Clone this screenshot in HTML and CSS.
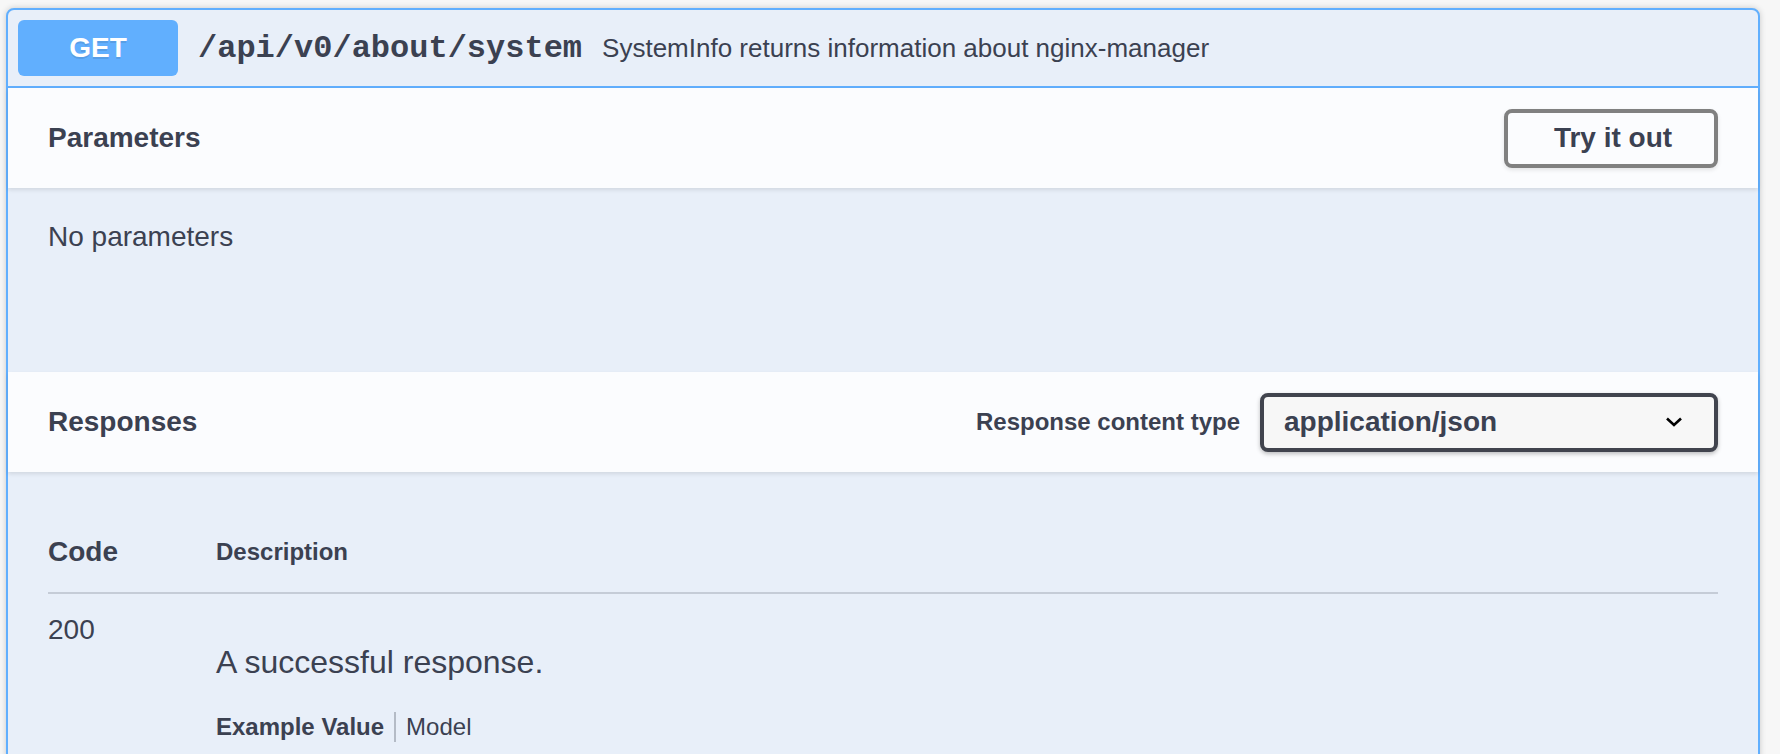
FILE: index.html
```html
<!DOCTYPE html>
<html lang="en">
<head>
<meta charset="utf-8">
<title>Swagger</title>
<link rel="stylesheet" href="styles.css">
</head>
<body>
<div class="opblock">
  <div class="summary">
    <span class="method">GET</span>
    <span class="path">/api/v0/about/system</span>
    <span class="summary-desc">SystemInfo returns information about nginx-manager</span>
  </div>
  <div class="section-header">
    <h4 class="section-title">Parameters</h4>
    <button class="try-out">Try it out</button>
  </div>
  <div class="params-body">
    <p class="no-params">No parameters</p>
  </div>
  <div class="section-header">
    <h4 class="section-title">Responses</h4>
    <div class="media-type">
      <span class="media-label">Response content type</span>
      <div class="select">
        <span>application/json</span>
        <svg class="chev" width="20" height="14" viewBox="0 0 20 14"><path d="M3 3.5 L10 10 L17 3.5" fill="none" stroke="#000" stroke-width="2.6"/></svg>
      </div>
    </div>
  </div>
  <div class="responses-body">
    <div class="thead">
      <div class="col-code th-code">Code</div>
      <div class="col-desc th-desc">Description</div>
    </div>
    <div class="row">
      <div class="col-code status">200</div>
      <div class="col-desc">
        <p class="resp-text">A successful response.</p>
        <div class="tabs">
          <span class="tab active">Example Value</span>
          <span class="tab-sep"></span>
          <span class="tab">Model</span>
        </div>
      </div>
    </div>
  </div>
</div>
</body>
</html>
```
FILE: styles.css
```css
html, body {
  margin: 0;
  height: 100%;
}
body {
  background: #f7f7f7;
  padding: 8px 20px 0 6px;
  font-family: "Liberation Sans", Arial, sans-serif;
  color: #3b4151;
  overflow: hidden;
}
.opblock {
  border: 2px solid #61affe;
  border-radius: 8px;
  background: #e8eff9;
  box-shadow: 0 0 6px rgba(0,0,0,.19);
  min-height: 800px;
}
.summary {
  display: flex;
  align-items: center;
  padding: 10px;
  border-bottom: 2px solid #61affe;
}
.method {
  width: 160px;
  height: 56px;
  display: flex;
  align-items: center;
  justify-content: center;
  background: #61affe;
  color: #fff;
  font-weight: 700;
  font-size: 28px;
  border-radius: 6px;
  text-shadow: 0 2px 0 rgba(0,0,0,.1);
}
.path {
  font-family: "Liberation Mono", "Courier New", monospace;
  font-weight: 700;
  font-size: 32px;
  padding: 0 20px;
  color: #3b4151;
}
.summary-desc {
  font-size: 26px;
  color: #3b4151;
}
.section-header {
  display: flex;
  align-items: center;
  justify-content: space-between;
  min-height: 100px;
  box-sizing: border-box;
  padding: 16px 40px;
  background: rgba(255,255,255,.8);
  box-shadow: 0 2px 4px rgba(0,0,0,.1);
  position: relative;
}
.section-title {
  margin: 0;
  font-size: 28px;
  font-weight: 700;
}
.try-out {
  width: 214px;
  height: 59px;
  font-family: "Liberation Sans", Arial, sans-serif;
  font-size: 28px;
  font-weight: 700;
  color: #3b4151;
  background: transparent;
  border: 4px solid #808080;
  border-radius: 8px;
  box-shadow: 0 2px 4px rgba(0,0,0,.1);
  padding: 0 0 0 4px;
}
.params-body {
  height: 184px;
  box-sizing: border-box;
  padding: 30px 40px;
}
.no-params {
  margin: 0;
  font-size: 28px;
  line-height: 38px;
}
.media-type {
  display: flex;
  align-items: center;
  gap: 20px;
}
.media-label {
  font-size: 24px;
  font-weight: 700;
}
.select {
  width: 458px;
  height: 59px;
  box-sizing: border-box;
  display: flex;
  align-items: center;
  justify-content: space-between;
  padding: 0 30px 0 20px;
  background: #f7f7f7;
  border: 4px solid #41444e;
  border-radius: 8px;
  box-shadow: 0 2px 4px rgba(0,0,0,.25);
  font-size: 28px;
  font-weight: 700;
}
.responses-body {
  padding: 40px;
}
.thead {
  display: flex;
  align-items: center;
  padding: 24px 0;
  border-bottom: 2px solid rgba(59,65,81,.2);
}
.col-code {
  width: 168px;
  flex: none;
}
.col-desc {
  flex: 1;
}
.th-code {
  font-size: 28px;
  font-weight: 700;
  line-height: 32px;
}
.th-desc {
  font-size: 24px;
  font-weight: 700;
}
.row {
  display: flex;
  padding-top: 20px;
}
.status {
  font-size: 28px;
  line-height: 32px;
}
.resp-text {
  font-size: 32px;
  line-height: 38px;
  margin: 29px 0 31px;
}
.tabs {
  display: flex;
  align-items: center;
  font-size: 24px;
}
.tab.active {
  font-weight: 700;
}
.tab-sep {
  width: 2px;
  height: 30px;
  background: rgba(59,65,81,.3);
  margin: 0 10px;
}
```
